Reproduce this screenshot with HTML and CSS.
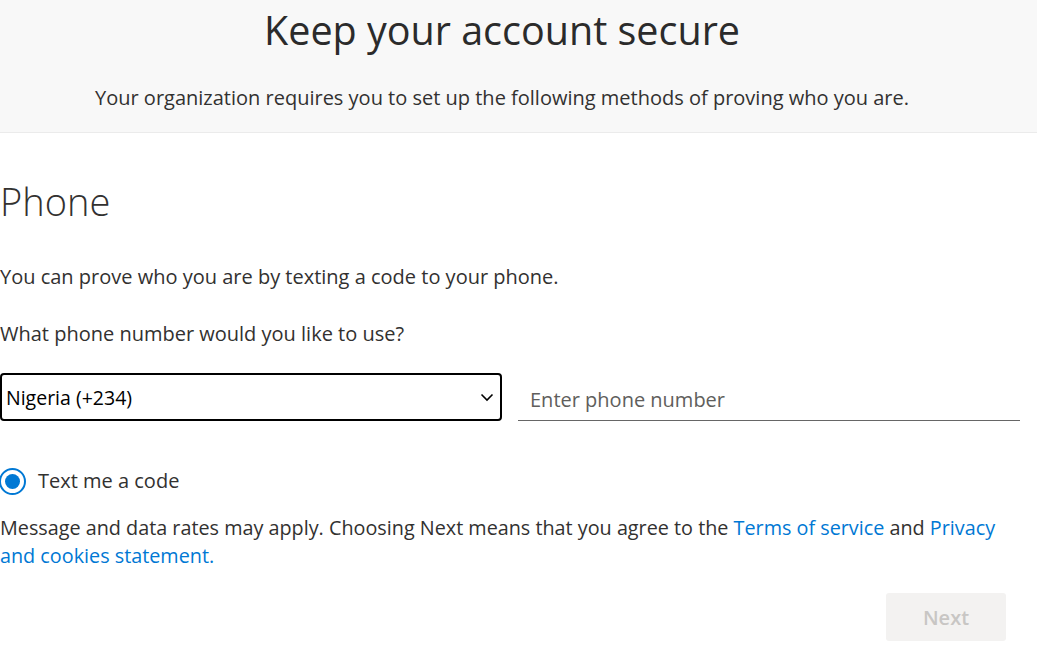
FILE: index.html
```html
<!DOCTYPE html>
<html lang="en">
<head>
<meta charset="utf-8">
<title>Keep your account secure</title>
<link rel="stylesheet" href="styles.css">
</head>
<body>
<header class="header">
  <h1 class="title">Keep your account secure</h1>
  <p class="subtitle">Your organization requires you to set up the following methods of proving who you are.</p>
</header>
<main class="content">
  <h2 class="method">Phone</h2>
  <p class="text intro">You can prove who you are by texting a code to your phone.</p>
  <p class="text question">What phone number would you like to use?</p>
  <div class="phone-row">
    <div class="select">
      <span class="select-value">Nigeria (+234)</span>
      <svg class="chevron" width="14" height="9" viewBox="0 0 14 9"><path d="M1.5 1.5 L7 7 L12.5 1.5" fill="none" stroke="#000" stroke-width="1.6"/></svg>
    </div>
    <div class="input"><span class="placeholder">Enter phone number</span></div>
  </div>
  <label class="radio">
    <span class="radio-circle"><span class="radio-dot"></span></span>
    <span class="radio-label">Text me a code</span>
  </label>
  <p class="text legal">Message and data rates may apply. Choosing Next means that you agree to the <a class="link" href="#">Terms of service</a> and <a class="link" href="#">Privacy</a><br><a class="link" href="#">and cookies statement.</a></p>
  <div class="actions">
    <button class="next" type="button">Next</button>
  </div>
</main>
</body>
</html>
```

FILE: styles.css
```css
html, body {
  margin: 0;
  padding: 0;
  background: #ffffff;
}
body {
  font-family: "Open Sans", "Noto Sans", sans-serif;
  color: #323130;
  width: 1037px;
  overflow: hidden;
}
.header {
  background: #f8f8f8;
  border-bottom: 1px solid #ebebeb;
  height: 133px;
  box-sizing: border-box;
  padding-right: 33px;
  text-align: center;
}
.title {
  margin: 0;
  padding-top: 4px;
  font-size: 39.5px;
  line-height: 52px;
  font-weight: 400;
  color: #2b2b2b;
}
.subtitle {
  margin: 0;
  padding-top: 28px;
  font-size: 20px;
  line-height: 28px;
  color: #323130;
}
.content {
  width: 1020px;
}
.method {
  margin: 0;
  padding-top: 43px;
  font-size: 38px;
  line-height: 50px;
  font-weight: 300;
  color: #323130;
}
.text {
  margin: 0;
  font-size: 20px;
  line-height: 28px;
}
.intro {
  padding-top: 37px;
}
.question {
  padding-top: 29px;
}
.phone-row {
  display: flex;
  gap: 16px;
  margin-top: 25px;
}
.select {
  flex: 0 0 502px;
  height: 48px;
  box-sizing: border-box;
  border: 2px solid #000;
  border-radius: 4px;
  display: flex;
  align-items: center;
  justify-content: space-between;
  padding: 0 6px 0 4px;
}
.select-value {
  font-size: 19.5px;
  color: #000;
}
.input {
  flex: 1;
  height: 48px;
  box-sizing: border-box;
  border-bottom: 1px solid #666;
  display: flex;
  align-items: center;
  padding: 5px 0 0 12px;
}
.placeholder {
  font-size: 20px;
  color: #605e5c;
}
.radio {
  display: flex;
  align-items: center;
  margin-top: 46px;
  margin-left: -1px;
  gap: 12px;
}
.radio-circle {
  width: 27px;
  height: 27px;
  border: 2px solid #0078d4;
  border-radius: 50%;
  display: flex;
  align-items: center;
  justify-content: center;
  box-sizing: border-box;
  background: #fff;
}
.radio-dot {
  width: 15px;
  height: 15px;
  border-radius: 50%;
  background: #0078d4;
}
.radio-label {
  font-size: 20px;
  line-height: 28px;
}
.legal {
  margin-top: 19px;
  font-size: 19.8px;
}
.link {
  color: #0078d4;
  text-decoration: none;
}
.actions {
  display: flex;
  justify-content: flex-end;
  padding-right: 14px;
  margin-top: 23px;
}
.next {
  width: 120px;
  height: 48px;
  border: none;
  border-radius: 3px;
  background: #f3f2f1;
  color: #c8c6c4;
  font-family: inherit;
  font-size: 20px;
  font-weight: 600;
}
```
